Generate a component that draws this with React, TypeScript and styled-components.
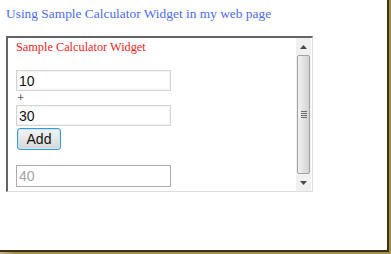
import * as React from 'react';
import styled, { createGlobalStyle } from 'styled-components';

const GlobalStyle = createGlobalStyle`
  html, body {
    margin: 0;
    padding: 0;
    background: #ffffff;
  }
`;

// golden photo frame round the captured page
const Frame = styled.div`
  width: 391px;
  height: 254px;
  background: linear-gradient(90deg, #c9b582 0%, #a58c45 4%, #a58c45 100%);
`;

const Paper = styled.div`
  box-sizing: border-box;
  width: 389px;
  height: 252px;
  background: #ffffff;
  border-right: 2px solid #3a3219;
  border-bottom: 2px solid #3a3219;
  padding: 6px 0 0 6px;
`;

const PageTitle = styled.div`
  font-family: 'Liberation Serif', 'Times New Roman', serif;
  font-size: 13.4px;
  line-height: 15px;
  color: #4d6cf2;
`;

const WidgetBox = styled.div`
  box-sizing: border-box;
  margin-top: 15px;
  width: 307px;
  height: 156px;
  display: flex;
  border-top: 2px solid #646464;
  border-left: 2px solid #646464;
  border-right: 1px solid #dedede;
  border-bottom: 1px solid #dedede;
`;

const Content = styled.div`
  flex: 1;
  padding: 2px 0 0 8px;
  display: flex;
  flex-direction: column;
  align-items: flex-start;
`;

const WidgetTitle = styled.div`
  font-family: 'Liberation Serif', 'Times New Roman', serif;
  font-size: 12.3px;
  line-height: 15px;
  color: #f21c1c;
  margin-bottom: 15px;
`;

const Field = styled.input<{ $result?: boolean }>`
  box-sizing: border-box;
  width: 155px;
  height: ${(p) => (p.$result ? '22px' : '21px')};
  margin: 0;
  padding: 0 2px;
  border: 1px solid ${(p) => (p.$result ? '#ababab' : '#d4d4d4')};
  box-shadow: ${(p) => (p.$result ? 'none' : 'inset 0 0 0 1px #f3f3f3')};
  font-family: 'Liberation Sans', Arial, sans-serif;
  font-size: 14px;
  color: ${(p) => (p.$result ? '#a3a3a3' : '#111111')};
  background: #ffffff;
  outline: none;
`;

const Operator = styled.div`
  font-family: 'Liberation Serif', 'Times New Roman', serif;
  font-size: 13px;
  line-height: 14px;
  height: 14px;
  color: #222222;
  padding-left: 1px;
`;

const AddButton = styled.button`
  box-sizing: border-box;
  margin: 2px 0 0 1px;
  width: 44px;
  height: 22px;
  padding: 0;
  border: 1px solid #3b9bd8;
  border-radius: 3px;
  background: linear-gradient(#f4f4f4, #e6e6e6 50%, #d6d6d6);
  box-shadow: inset 0 0 0 1px #c7e6f8;
  font-family: 'Liberation Sans', Arial, sans-serif;
  font-size: 14px;
  color: #111111;
`;

const ResultRow = styled.div`
  margin-top: 15px;
`;

const ScrollTrack = styled.div`
  width: 15px;
  margin-right: 1px;
  display: flex;
  flex-direction: column;
  background: #f0f0f0;
`;

const ArrowButton = styled.div`
  height: 17px;
  display: flex;
  align-items: center;
  justify-content: center;
`;

const Thumb = styled.div`
  box-sizing: border-box;
  flex: 1;
  margin: 0 1px;
  border: 1px solid #a2a2a2;
  border-radius: 2px;
  background: linear-gradient(90deg, #f2f2f2, #e2e2e2 50%, #d2d2d2);
  display: flex;
  align-items: center;
  justify-content: center;
`;

const Grip = styled.div`
  width: 6px;
  height: 7px;
  background: repeating-linear-gradient(#6e6e6e 0 1px, transparent 1px 2px);
`;

function Arrow({ up }: { up?: boolean }) {
  return (
    <svg width="7" height="4" viewBox="0 0 7 4">
      <path d={up ? 'M0 4 L3.5 0 L7 4 Z' : 'M0 0 L3.5 4 L7 0 Z'} fill="#4a4a4a" />
    </svg>
  );
}

export default function App() {
  return (
    <>
      <GlobalStyle />
      <Frame>
        <Paper>
          <PageTitle>Using Sample Calculator Widget in my web page</PageTitle>
          <WidgetBox>
            <Content>
              <WidgetTitle>Sample Calculator Widget</WidgetTitle>
              <Field defaultValue="10" />
              <Operator>+</Operator>
              <Field defaultValue="30" />
              <AddButton>Add</AddButton>
              <ResultRow>
                <Field $result readOnly defaultValue="40" />
              </ResultRow>
            </Content>
            <ScrollTrack>
              <ArrowButton>
                <Arrow up />
              </ArrowButton>
              <Thumb>
                <Grip />
              </Thumb>
              <ArrowButton>
                <Arrow />
              </ArrowButton>
            </ScrollTrack>
          </WidgetBox>
        </Paper>
      </Frame>
    </>
  );
}
